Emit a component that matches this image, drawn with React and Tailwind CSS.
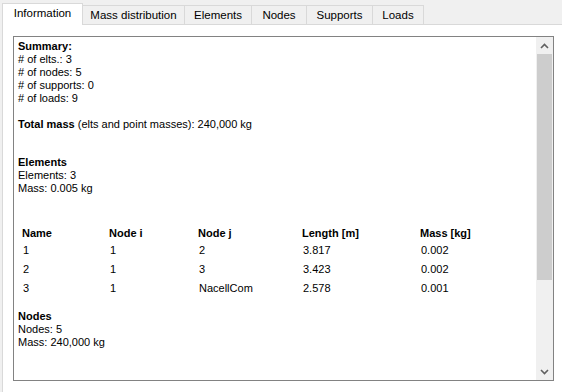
const tabs = [
  { label: 'Information', w: 'w-[81px]', active: true },
  { label: 'Mass distribution', w: 'w-[102px]' },
  { label: 'Elements', w: 'w-[67px]' },
  { label: 'Nodes', w: 'w-[55px]' },
  { label: 'Supports', w: 'w-[66px]' },
  { label: 'Loads', w: 'w-[51px]' },
];

const rows = [
  ['1', '1', '2', '3.817', '0.002'],
  ['2', '1', '3', '3.423', '0.002'],
  ['3', '1', 'NacellCom', '2.578', '0.001'],
];

const Chevron = ({ down }) => (
  <svg width="9" height="6" viewBox="0 0 9 6" className={down ? 'rotate-180' : ''}>
    <path d="M1 5 L4.5 1.5 L8 5" fill="none" stroke="#606060" strokeWidth="1.6" />
  </svg>
);

const App = () => {
  return (
    <div className="w-[562px] h-[392px] bg-[#f0f0f0] flex flex-col text-black font-['Liberation_Sans',Arial,sans-serif] overflow-hidden">
      <div className="flex items-end h-[25px] pl-[2px] relative z-10">
        {tabs.map((t) =>
          t.active ? (
            <div
              key={t.label}
              className={`${t.w} h-[22px] bg-white border border-b-0 border-[#d9d9d9] flex items-center justify-center text-[11.5px] pb-[1px]`}
            >
              {t.label}
            </div>
          ) : (
            <div
              key={t.label}
              className={`${t.w} h-[19px] mb-px bg-[#f0f0f0] border border-l-0 border-b-0 border-[#d9d9d9] flex items-center justify-center text-[11.5px] pt-[1px]`}
            >
              {t.label}
            </div>
          )
        )}
      </div>
      <div className="flex-1 ml-[2px] -mt-px bg-white border border-r-0 border-b-0 border-[#d9d9d9] pl-[10px] pt-[11px] pb-[11px] pr-[8px] flex">
        <div className="flex-1 border border-[#828282] bg-white flex">
          <div className="flex-1 pl-[4px] pt-[3px] text-[11px] leading-[13px]">
            <div className="font-bold">Summary:</div>
            <div># of elts.: 3</div>
            <div># of nodes: 5</div>
            <div># of supports: 0</div>
            <div># of loads: 9</div>
            <div className="mt-[13px]">
              <span className="font-bold">Total mass</span> (elts and point masses): 240,000 kg
            </div>
            <div className="mt-[25px] font-bold">Elements</div>
            <div>Elements: 3</div>
            <div>Mass: 0.005 kg</div>
            <table className="mt-[32px] ml-[4px] border-collapse">
              <thead>
                <tr className="h-[17px] align-top">
                  <th className="w-[87px] text-left font-bold p-0">Name</th>
                  <th className="w-[89px] text-left font-bold p-0">Node i</th>
                  <th className="w-[104px] text-left font-bold p-0">Node j</th>
                  <th className="w-[118px] text-left font-bold p-0">Length [m]</th>
                  <th className="text-left font-bold p-0">Mass [kg]</th>
                </tr>
              </thead>
              <tbody>
                {rows.map((r) => (
                  <tr key={r[0]} className="h-[19px] align-top">
                    {r.map((c, i) => (
                      <td key={i} className="p-0 pl-px">{c}</td>
                    ))}
                  </tr>
                ))}
              </tbody>
            </table>
            <div className="mt-[9px] font-bold">Nodes</div>
            <div>Nodes: 5</div>
            <div>Mass: 240,000 kg</div>
          </div>
          <div className="w-[17px] bg-[#f0f0f0] flex flex-col">
            <div className="h-[17px] flex items-center justify-center">
              <Chevron />
            </div>
            <div className="h-[226px] mx-px bg-[#cdcdcd]" />
            <div className="flex-1" />
            <div className="h-[17px] flex items-center justify-center">
              <Chevron down />
            </div>
          </div>
        </div>
      </div>
    </div>
  );
};

export default App;
